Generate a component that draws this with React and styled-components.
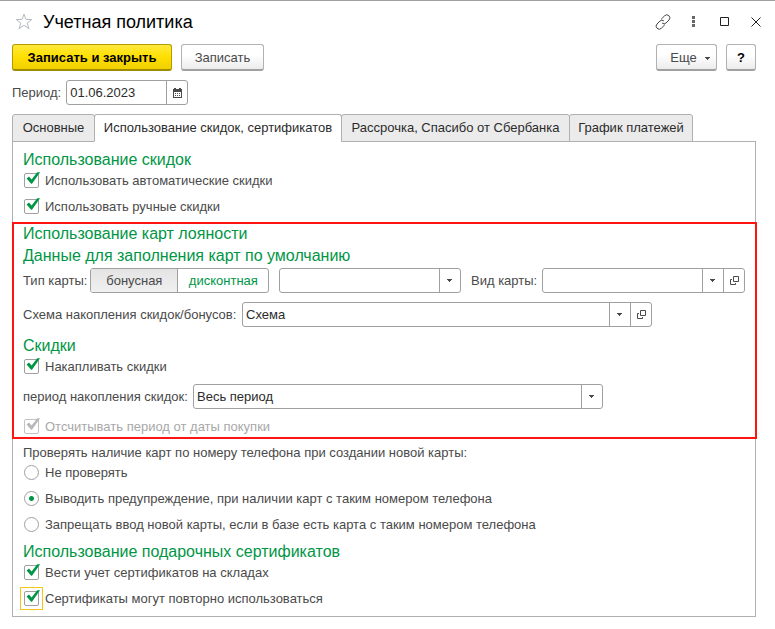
import React, { useId, useState } from "react";
import styled, { createGlobalStyle, css } from "styled-components";

const c = {
  text: "#4a4a4a",
  dark: "#2b2b2b",
  green: "#009646",
  line: "#a0a0a0",
  panel: "#b0b0b0",
  red: "#ff1414",
};

const GlobalStyle = createGlobalStyle`
  *, *::before, *::after { box-sizing: border-box; }
  body {
    margin: 0;
    background: #fff;
    color: ${c.text};
    font: 13px/16px "Liberation Sans", Arial, sans-serif;
  }
  button, input, select { font: inherit; color: inherit; margin: 0; }
`;

const Window = styled.main`
  border-top: 1px solid ${c.line};
  padding: 8px 19px 12px 12px;
`;

const TitleBar = styled.header`
  display: flex;
  align-items: center;
  height: 25px;
  margin-right: -15px;
`;

const IconButton = styled.button`
  display: grid;
  place-items: center;
  width: ${(p) => p.$width || 31}px;
  height: 24px;
  padding: 0;
  border: 0;
  background: none;
  color: #444;
`;

const Title = styled.h1`
  flex: 1;
  margin: 0 0 0 7px;
  font-size: 18px;
  line-height: 24px;
  font-weight: 400;
  color: #000;
`;

const Toolbar = styled.div`
  display: flex;
  align-items: center;
  gap: 9px;
  margin-top: 10px;
`;

const Spacer = styled.div`
  flex: 1;
`;

const Button = styled.button`
  display: flex;
  align-items: center;
  justify-content: center;
  gap: 8px;
  min-width: ${(p) => p.$width}px;
  height: 27px;
  padding: ${(p) => (p.$menu ? "2px 6px 0 13px" : "2px 6px 0")};
  border: 1px solid #b2b2b2;
  border-bottom: 2px solid #a0a0a0;
  border-radius: 3px;
  background: linear-gradient(#fff 40%, #ececec);
  ${(p) =>
    p.$primary &&
    css`
      border-color: #b39a00;
      border-bottom-color: #a08a00;
      background: linear-gradient(#ffe93c, #ffdf00 50%, #f0d000);
      color: #000;
      font-weight: 700;
    `}
  ${(p) =>
    p.$strong &&
    css`
      color: #000;
      font-weight: 700;
    `}
`;

const Row = styled.div`
  display: flex;
  align-items: center;
  gap: ${(p) => p.$gap || 5}px;
`;

const PeriodRow = styled(Row)`
  margin: 9px 0;
`;

const FieldLabel = styled.label`
  flex: none;
  min-width: ${(p) => p.$width || 0}px;
`;

const FieldBox = styled.div`
  display: grid;
  grid-template-columns: minmax(0, 1fr) ${(p) => (p.$open ? "21px 21px" : "21px")};
  flex: 0 1 ${(p) => p.$width}px;
  height: 25px;
  border: 1px solid ${c.line};
  border-radius: 3px;
  background: #fff;
  color: ${c.dark};
`;

const TextInput = styled.input`
  min-width: 0;
  padding: 0 3px;
  border: 0;
  background: none;
  outline: none;
`;

const Select = styled.select`
  grid-area: 1 / 1 / 2 / 3;
  min-width: 0;
  padding: 0 25px 0 3px;
  border: 0;
  background: none;
  appearance: none;
  outline: none;
`;

const cell = css`
  display: grid;
  place-items: center;
  border: 0;
  border-left: 1px solid ${c.line};
  background: none;
  color: ${c.text};
`;

const ArrowCell = styled.span`
  ${cell}
  grid-area: 1 / 2;
  padding-right: 2px;
  pointer-events: none;
`;

const CellButton = styled.button`
  ${cell}
  padding: 0;
`;

const Tabs = styled.div`
  display: flex;
  position: relative;
  margin-bottom: -1px;
`;

const Tab = styled.button`
  min-width: ${(p) => p.$width}px;
  height: 28px;
  margin-right: -1px;
  padding: 0 8px;
  border: 1px solid ${c.panel};
  border-bottom-color: ${(p) => (p.$active ? "#fff" : c.panel)};
  border-radius: 3px 3px 0 0;
  background: ${(p) => (p.$active ? "#fff" : "#ebebeb")};
  color: ${c.dark};
  white-space: nowrap;
`;

const Panel = styled.div`
  border: 1px solid ${c.panel};
`;

const Section = styled.section`
  display: flex;
  flex-direction: column;
  gap: 9px;
  padding: 8px 10px 7px;
`;

const CheckSection = styled(Section)`
  padding: 5px 10px 9px;
`;

const HighlightSection = styled(Section)`
  margin: 0 -2px 0 -1px;
  padding: 0 10px 2px 9px;
  border: 2px solid ${c.red};
`;

const Group = styled.div`
  display: flex;
  flex-direction: column;
  gap: 2px;
`;

const Heading = styled.h2`
  margin: 0;
  font-size: 16px;
  line-height: 20px;
  font-weight: 400;
  color: ${c.green};
`;

const Lead = styled.span`
  line-height: 18px;
`;

const Choice = styled.label`
  display: flex;
  align-items: center;
  gap: 6px;
  align-self: flex-start;
  padding-left: 1px;
  line-height: 17px;
  color: ${(p) => (p.$disabled ? "#a8a8a8" : c.text)};
`;

const CheckHolder = styled.span`
  display: grid;
  position: relative;
  color: ${(p) => (p.$disabled ? "#b8b8b8" : c.green)};
  outline: ${(p) => (p.$focused ? "1px solid #f5c518" : "none")};
  outline-offset: 3px;
`;

const CheckInput = styled.input`
  width: 15px;
  height: 15px;
  appearance: none;
  border: 1px solid ${(p) => (p.disabled ? "#c4c4c4" : c.line)};
  border-radius: 2px;
  background: #fff;
  outline: none;
  &:not(:checked) + svg { display: none; }
`;

const Tick = styled.svg`
  position: absolute;
  left: 0;
  top: -2px;
  pointer-events: none;
`;

const RadioInput = styled.input`
  width: 15px;
  height: 15px;
  appearance: none;
  border: 1px solid ${c.line};
  border-radius: 50%;
  background: #fff;
  &:checked { background: radial-gradient(circle, ${c.green} 2px, #fff 3px); }
`;

const Segments = styled.div`
  display: flex;
  flex: none;
  height: 25px;
  margin-right: 7px;
  border: 1px solid ${c.line};
  border-radius: 3px;
  overflow: hidden;
`;

const Segment = styled.label`
  display: grid;
  place-items: center;
  min-width: ${(p) => p.$width}px;
  color: ${c.green};
  & + & { border-left: 1px solid ${c.line}; }
  &:has(:checked) {
    color: ${c.text};
    background: linear-gradient(#e4e4e4, #f0f0f0);
  }
`;

const SegmentInput = styled.input`
  position: absolute;
  appearance: none;
  width: 0;
  height: 0;
`;

const Arrow = () => (
  <svg width="5" height="3" viewBox="0 0 5 3" aria-hidden="true">
    <path d="M0 0h5v1H4v1H3v1H2V2H1V1H0z" fill="currentColor" />
  </svg>
);

const OpenIcon = () => (
  <svg width="9" height="9" viewBox="0 0 9 9" fill="none" stroke="currentColor" aria-hidden="true">
    <path d="M3.5.5h5v5h-5zM2 3.5H.5v5h5V7" />
  </svg>
);

function SelectField({ id, width, value, open, name }) {
  return (
    <FieldBox $width={width} $open={open}>
      <Select id={id} aria-label={name} defaultValue={value}>
        <option value={value}>{value}</option>
      </Select>
      <ArrowCell><Arrow /></ArrowCell>
      {open && <CellButton type="button" aria-label="Открыть"><OpenIcon /></CellButton>}
    </FieldBox>
  );
}

function Combo({ label, labelWidth, ...field }) {
  const id = useId();
  return (
    <>
      <FieldLabel htmlFor={id} $width={labelWidth}>{label}</FieldLabel>
      <SelectField id={id} {...field} />
    </>
  );
}

function Check({ children, disabled, focused }) {
  return (
    <Choice $disabled={disabled}>
      <CheckHolder $disabled={disabled} $focused={focused}>
        <CheckInput type="checkbox" defaultChecked disabled={disabled} />
        <Tick width="17" height="15" viewBox="0 0 17 15" aria-hidden="true">
          <path d="M2.6 7.4 5 5.6l2.6 3L13.2 1.2h2.9L8 12.8h-.9z" fill="currentColor" />
        </Tick>
      </CheckHolder>
      {children}
    </Choice>
  );
}

function Radio({ children, checked }) {
  return (
    <Choice>
      <RadioInput type="radio" name="phoneCheck" defaultChecked={checked} />
      {children}
    </Choice>
  );
}

const tabs = [
  ["Основные", 83],
  ["Использование скидок, сертификатов", 248],
  ["Рассрочка, Спасибо от Сбербанка", 229],
  ["График платежей", 124],
];

export default function App() {
  const [tab, setTab] = useState(1);
  return (
    <Window>
      <GlobalStyle />
      <TitleBar>
        <IconButton $width={24} aria-label="В избранное">
          <svg width="18" height="17" viewBox="0 0 18 17" fill="none" stroke="#b4bac2">
            <path d="M9 1.2 11 6.5h5.7l-4.5 3.6 1.7 5.5L9 12.3l-4.9 3.3 1.7-5.5L1.3 6.5H7z" />
          </svg>
        </IconButton>
        <Title>Учетная политика</Title>
        <IconButton aria-label="Ссылка">
          <svg width="16" height="16" viewBox="0 0 16 16" fill="none" stroke="currentColor" strokeLinecap="round">
            <path d="M6.4 5 9.6 1.8a2.9 2.9 0 0 1 4.4 4.2l-3 3a2.7 2.7 0 0 1-3.6.3M9.6 11l-3.2 3.2A2.9 2.9 0 0 1 2 10l3-3a2.7 2.7 0 0 1 3.6-.3" />
          </svg>
        </IconButton>
        <IconButton aria-label="Меню">
          <svg width="3" height="11" viewBox="0 0 3 11" fill="#666">
            <path d="M0 0h3v3H0zM0 4h3v3H0zM0 8h3v3H0z" />
          </svg>
        </IconButton>
        <IconButton aria-label="Развернуть">
          <svg width="9" height="9" viewBox="0 0 9 9" fill="none" stroke="#222">
            <path d="M.5.5h8v8h-8z" />
          </svg>
        </IconButton>
        <IconButton aria-label="Закрыть">
          <svg width="10" height="10" viewBox="0 0 10 10" fill="none" stroke="#222">
            <path d="m.5.5 9 9m0-9-9 9" />
          </svg>
        </IconButton>
      </TitleBar>

      <Toolbar>
        <Button $primary $width={160}>Записать и закрыть</Button>
        <Button $width={83}>Записать</Button>
        <Spacer />
        <Button $menu $width={61}>Еще <Arrow /></Button>
        <Button $strong $width={30} aria-label="Справка">?</Button>
      </Toolbar>

      <PeriodRow>
        <FieldLabel htmlFor="period" $width={49}>Период:</FieldLabel>
        <FieldBox $width={122}>
          <TextInput id="period" defaultValue="01.06.2023" />
          <CellButton type="button" aria-label="Выбрать дату">
            <svg width="9" height="10" viewBox="0 0 9 10" aria-hidden="true">
              <path
                fillRule="evenodd"
                fill="currentColor"
                d="M0 1h1V0h2v1h3V0h2v1h1v9H0zM1 4v5h7V4zM2 5h1v1H2zM4 5h1v1H4zM6 5h1v1H6zM2 7h1v1H2zM4 7h1v1H4zM6 7h1v1H6z"
              />
            </svg>
          </CellButton>
        </FieldBox>
      </PeriodRow>

      <Tabs role="tablist">
        {tabs.map(([name, width], i) => (
          <Tab
            key={name}
            role="tab"
            aria-selected={tab === i}
            $active={tab === i}
            $width={width}
            onClick={() => setTab(i)}
          >
            {name}
          </Tab>
        ))}
      </Tabs>

      <Panel>
        <Section>
          <Group>
            <Heading>Использование скидок</Heading>
            <Check>Использовать автоматические скидки</Check>
          </Group>
          <Check>Использовать ручные скидки</Check>
        </Section>

        <HighlightSection>
          <Group>
            <Heading>Использование карт лояности</Heading>
            <Heading>Данные для заполнения карт по умолчанию</Heading>
            <Row $gap={3}>
              <FieldLabel as="span">Тип карты:</FieldLabel>
              <Segments role="radiogroup" aria-label="Тип карты">
                <Segment $width={86}>
                  <SegmentInput type="radio" name="cardType" defaultChecked />
                  бонусная
                </Segment>
                <Segment $width={91}>
                  <SegmentInput type="radio" name="cardType" />
                  дисконтная
                </Segment>
              </Segments>
              <SelectField name="Значение типа карты" width={182} value="" />
              <Spacer />
              <Combo label="Вид карты:" labelWidth={68} width={203} value="" open />
            </Row>
          </Group>
          <Row>
            <Combo label="Схема накопления скидок/бонусов:" labelWidth={214} width={410} value="Схема" open />
          </Row>
          <Group>
            <Heading>Скидки</Heading>
            <Check>Накапливать скидки</Check>
          </Group>
          <Row>
            <Combo label="период накопления скидок:" labelWidth={165} width={410} value="Весь период" />
          </Row>
          <Check disabled>Отсчитывать период от даты покупки</Check>
        </HighlightSection>

        <CheckSection>
          <Group>
            <Lead>Проверять наличие карт по номеру телефона при создании новой карты:</Lead>
            <Radio>Не проверять</Radio>
          </Group>
          <Radio checked>Выводить предупреждение, при наличии карт с таким номером телефона</Radio>
          <Radio>Запрещать ввод новой карты, если в базе есть карта с таким номером телефона</Radio>
          <Group>
            <Heading>Использование подарочных сертификатов</Heading>
            <Check>Вести учет сертификатов на складах</Check>
          </Group>
          <Check focused>Сертификаты могут повторно использоваться</Check>
        </CheckSection>
      </Panel>
    </Window>
  );
}
